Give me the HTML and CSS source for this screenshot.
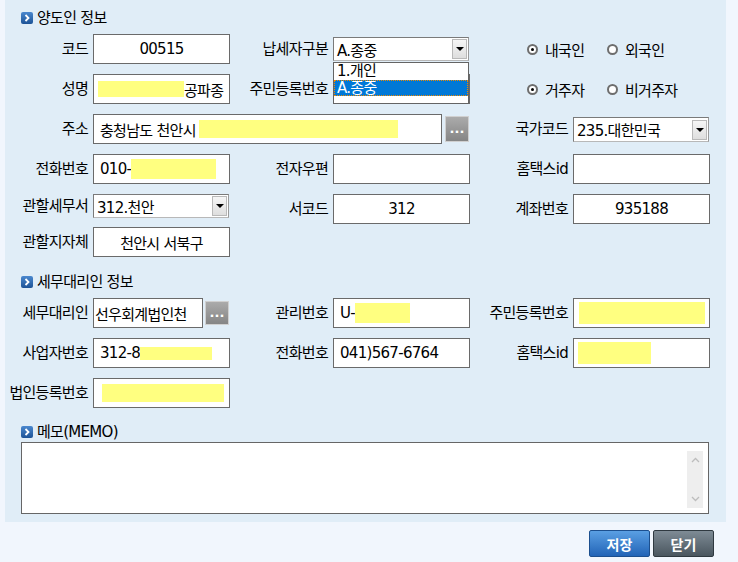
FILE: index.html
```html
<!DOCTYPE html>
<html lang="ko">
<head>
<meta charset="utf-8">
<title>양도인 정보</title>
<link rel="stylesheet" href="styles.css">
</head>
<body>
<div class="panel">
  <div class="sec-title"><span class="ico"><svg width="12" height="12" viewBox="0 0 12 12"><polyline points="4.5,3 7.5,6 4.5,9" fill="none" stroke="#fff" stroke-width="1.8"/></svg></span>양도인 정보</div>
  <div class="form g1">
    <div class="lbl">코드</div>
    <div class="fld c">00515</div>
    <div class="lbl">납세자구분</div>
    <div class="sel w136">
      <span class="sel-text">A.종중</span><span class="sel-btn"><i class="tri"></i></span>
      <div class="drop">
        <div class="opt">1.개인</div>
        <div class="opt on">A.종중</div>
      </div>
    </div>
    <div class="radios">
      <div class="radio"><span class="rb on"></span>내국인</div>
      <div class="radio"><span class="rb"></span>외국인</div>
    </div>

    <div class="lbl">성명</div>
    <div class="fld p4"><span class="hl" style="width:86px;height:16px"></span>공파종</div>
    <div class="lbl">주민등록번호</div>
    <div class="fld"></div>
    <div class="radios">
      <div class="radio"><span class="rb on"></span>거주자</div>
      <div class="radio"><span class="rb"></span>비거주자</div>
    </div>

    <div class="lbl">주소</div>
    <div class="addr">
      <div class="fld">충청남도 천안시<span class="hl ml" style="width:199px;height:18px"></span></div>
      <div class="more">...</div>
    </div>
    <div class="lbl">국가코드</div>
    <div class="sel w136 h25"><span class="sel-text">235.대한민국</span><span class="sel-btn"><i class="tri"></i></span></div>

    <div class="lbl">전화번호</div>
    <div class="fld">010-<span class="hl" style="width:85px;height:20px"></span></div>
    <div class="lbl">전자우편</div>
    <div class="fld"></div>
    <div class="lbl">홈택스id</div>
    <div class="fld"></div>

    <div class="lbl l24">관할세무서</div>
    <div class="sel w136 top"><span class="sel-text">312.천안</span><span class="sel-btn"><i class="tri"></i></span></div>
    <div class="lbl">서코드</div>
    <div class="fld c">312</div>
    <div class="lbl">계좌번호</div>
    <div class="fld c">935188</div>

    <div class="lbl">관할지자체</div>
    <div class="fld c">천안시 서북구</div>
  </div>

  <div class="sec-title s2"><span class="ico"><svg width="12" height="12" viewBox="0 0 12 12"><polyline points="4.5,3 7.5,6 4.5,9" fill="none" stroke="#fff" stroke-width="1.8"/></svg></span>세무대리인 정보</div>
  <div class="form g2">
    <div class="lbl">세무대리인</div>
    <div class="agent">
      <div class="fld p2">선우회계법인천</div>
      <div class="more sm">...</div>
    </div>
    <div class="lbl">관리번호</div>
    <div class="fld">U-<span class="hl" style="width:55px;height:20px"></span></div>
    <div class="lbl">주민등록번호</div>
    <div class="fld p5"><span class="hl" style="width:126px;height:22px"></span></div>

    <div class="lbl">사업자번호</div>
    <div class="fld">312-8<span class="hl" style="width:72px;height:13px"></span></div>
    <div class="lbl">전화번호</div>
    <div class="fld">041)567-6764</div>
    <div class="lbl">홈택스id</div>
    <div class="fld p4"><span class="hl" style="width:73px;height:22px"></span></div>

    <div class="lbl">법인등록번호</div>
    <div class="fld p8"><span class="hl" style="width:122px;height:18px"></span></div>
  </div>

  <div class="sec-title s3"><span class="ico"><svg width="12" height="12" viewBox="0 0 12 12"><polyline points="4.5,3 7.5,6 4.5,9" fill="none" stroke="#fff" stroke-width="1.8"/></svg></span>메모(MEMO)</div>
  <div class="memo">
    <div class="sb">
      <svg width="9" height="6" viewBox="0 0 9 6"><polyline points="1,5 4.5,1.5 8,5" fill="none" stroke="#bdbdbd" stroke-width="1.3"/></svg>
      <svg width="9" height="6" viewBox="0 0 9 6"><polyline points="1,1 4.5,4.5 8,1" fill="none" stroke="#bdbdbd" stroke-width="1.3"/></svg>
    </div>
  </div>
</div>
<div class="actions">
  <div class="btn save">저장</div>
  <div class="btn close">닫기</div>
</div>
</body>
</html>
```
FILE: styles.css
```css
html, body {
  margin: 0;
  background: #f1f6fd;
}
body {
  font-family: "DejaVu Sans", "Noto Sans CJK KR", sans-serif;
  font-size: 15px;
  letter-spacing: -0.7px;
  color: #000;
  width: 738px;
  height: 562px;
  overflow: hidden;
}
.panel {
  width: 721px;
  margin-left: 5px;
  background: #e0edf7;
  padding: 8px 0 8px;
  box-sizing: border-box;
}
.sec-title {
  display: flex;
  align-items: center;
  gap: 4px;
  height: 20px;
  line-height: 20px;
  padding-left: 16px;
}
.sec-title.s2 { margin-top: 15px; }
.sec-title.s3 { margin-top: 14px; }
.ico {
  width: 12px;
  height: 12px;
  border-radius: 2px;
  background: linear-gradient(#4a88cf, #1d5396);
  display: flex;
  flex: none;
}
.form {
  display: grid;
  grid-template-columns: 88px 137px 103px 137px 103px 137px;
  align-items: start;
  row-gap: 10px;
  margin-top: 6px;
}
.g1 { grid-template-rows: 30px 30px 30px 30px 23px 30px; }
.g2 { grid-template-rows: 30px 30px 30px; }
.lbl {
  line-height: 30px;
  height: 30px;
  text-align: right;
  padding-right: 5px;
  white-space: nowrap;
}
.lbl.l24 { line-height: 24px; height: 24px; }
.fld {
  height: 30px;
  box-sizing: border-box;
  border: 1px solid #6a6a6a;
  background: #fff;
  display: flex;
  align-items: center;
  padding: 0 6px;
  white-space: nowrap;
  overflow: hidden;
}
.fld.c { justify-content: center; }
.fld.p2 { padding-left: 1px; }
.fld.p4 { padding-left: 4px; }
.fld.p5 { padding-left: 5px; }
.fld.p8 { padding-left: 8px; }
.hl {
  display: inline-block;
  flex: none;
  background: #ffff80;
}
.hl.ml { margin-left: 3px; }

.sel {
  position: relative;
  height: 24px;
  margin-top: 3px;
  box-sizing: border-box;
  border: 1px solid #7a7a7a;
  border-bottom-color: #b8b8b8;
  border-right-color: #9a9a9a;
  background: #fff;
  display: flex;
  align-items: center;
  justify-content: space-between;
  padding-left: 3px;
  white-space: nowrap;
}
.sel.w136 { width: 136px; }
.sel.h25 { height: 25px; }
.sel.top { margin-top: 0; }
.sel-btn {
  width: 15px;
  height: 20px;
  margin-right: 1px;
  box-sizing: border-box;
  border: 1px solid #b9b9b9;
  background: linear-gradient(#f6f6f6, #dedede);
  display: flex;
  align-items: center;
  justify-content: center;
}
.tri {
  width: 0;
  height: 0;
  border-left: 4px solid transparent;
  border-right: 4px solid transparent;
  border-top: 4px solid #000;
}
.drop {
  position: absolute;
  left: -1px;
  top: 24px;
  width: 136px;
  height: 42px;
  box-sizing: border-box;
  border: 1px solid #646464;
  background: #fff;
  z-index: 2;
}
.opt {
  height: 17px;
  line-height: 17px;
  padding-left: 3px;
}
.opt.on {
  height: 16px;
  line-height: 16px;
  background: #0078d7;
  color: #fff;
  outline: 1px dotted #f08a00;
  outline-offset: -1px;
}

.radios {
  grid-column: span 2;
  display: flex;
  align-items: center;
  height: 30px;
  padding-left: 57px;
}
.radio {
  width: 80px;
  display: flex;
  align-items: center;
  gap: 7px;
}
.rb {
  width: 11px;
  height: 11px;
  box-sizing: border-box;
  border: 2px solid #6e6e6e;
  border-radius: 50%;
  background: #fff;
  display: flex;
  align-items: center;
  justify-content: center;
}
.rb.on::after {
  content: "";
  width: 3px;
  height: 3px;
  border-radius: 50%;
  background: #000;
}

.addr {
  grid-column: span 3;
  display: flex;
  gap: 3px;
}
.addr .fld { width: 349px; }
.more {
  width: 24px;
  height: 26px;
  margin-top: 2px;
  box-sizing: border-box;
  border: 1px solid #d0d0d0;
  background: linear-gradient(#ababab, #858585);
  color: #fff;
  font-size: 13px;
  font-weight: bold;
  letter-spacing: 0;
  line-height: 1;
  display: flex;
  align-items: flex-end;
  justify-content: center;
  padding-bottom: 6px;
}
.more.sm { height: 24px; margin-top: 3px; padding-bottom: 5px; }
.agent {
  display: flex;
  gap: 2px;
}
.agent .fld { width: 110px; flex: none; }

.memo {
  margin-left: 16px;
  width: 688px;
  height: 72px;
  box-sizing: border-box;
  border: 1px solid #666;
  background: #fff;
  display: flex;
  justify-content: flex-end;
  padding: 8px 5px 5px 0;
}
.sb {
  width: 16px;
  background: #eeeeee;
  display: flex;
  flex-direction: column;
  justify-content: space-between;
  align-items: center;
  padding: 6px 0;
  box-sizing: border-box;
}

.actions {
  display: flex;
  justify-content: flex-end;
  gap: 3px;
  padding: 8px 24px 0 0;
}
.btn {
  width: 61px;
  height: 27px;
  box-sizing: border-box;
  border-radius: 2px;
  color: #fff;
  font-weight: bold;
  font-size: 14px;
  letter-spacing: 0;
  display: flex;
  align-items: center;
  justify-content: center;
}
.btn.save {
  background: linear-gradient(#5a9fe3, #2264b7);
  border: 1px solid #1c4f8e;
}
.btn.close {
  background: linear-gradient(#7e8b95, #4a565f);
  border: 1px solid #2f3940;
}
```
